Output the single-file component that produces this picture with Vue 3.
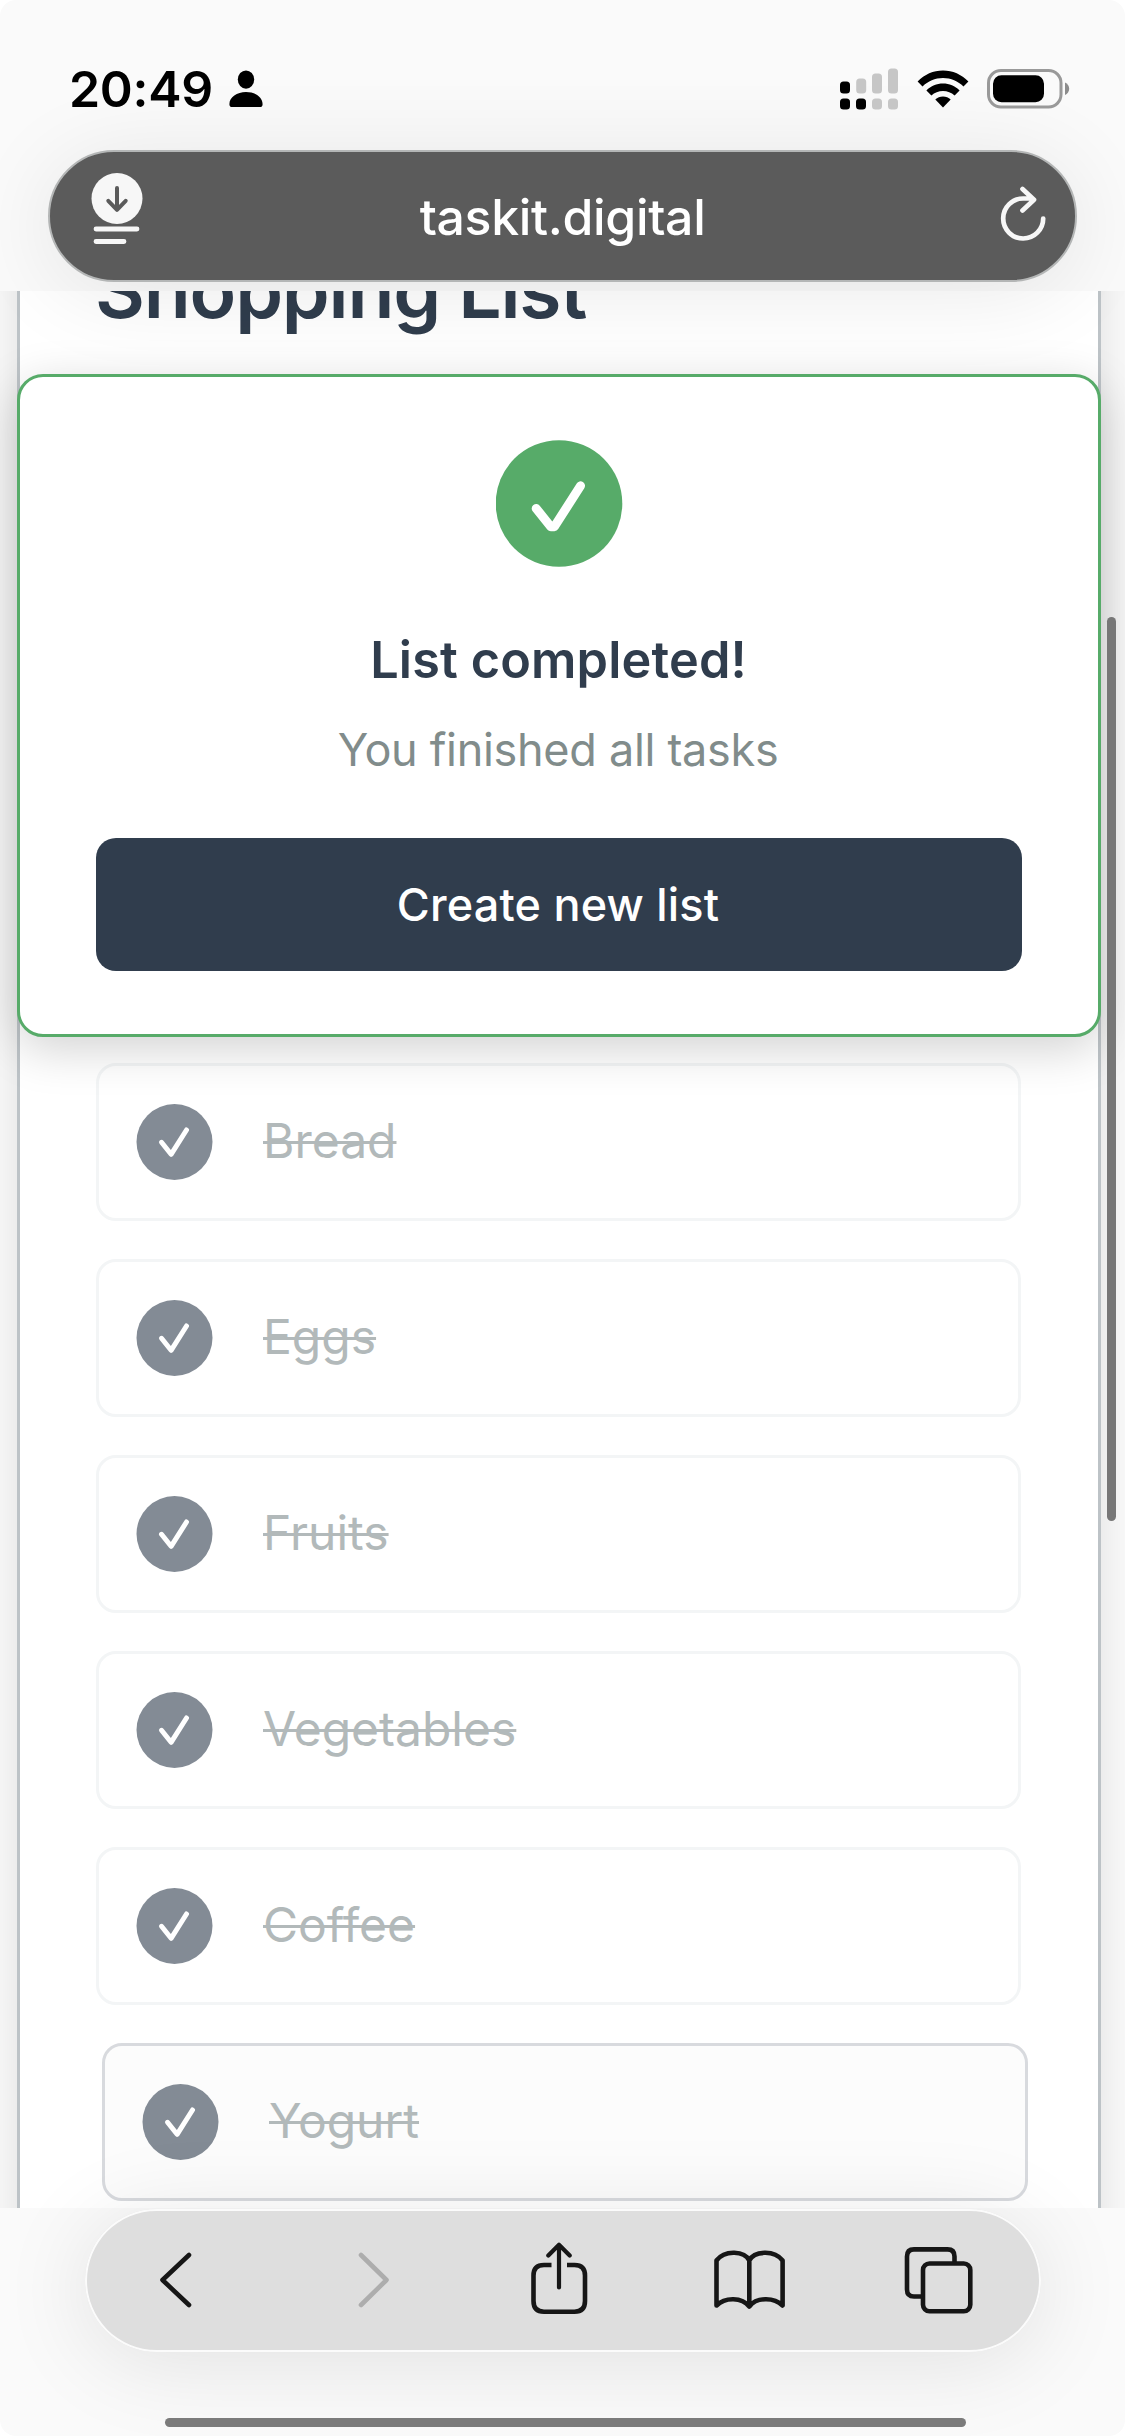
<script setup>
const items = [
  { name: 'Bread' },
  { name: 'Eggs' },
  { name: 'Fruits' },
  { name: 'Vegetables' },
  { name: 'Coffee' },
  { name: 'Yogurt', active: true },
]
</script>

<template>
  <div class="screen">
    <header class="top">
      <div class="status">
        <div class="clock">
          <span class="time">20:49</span>
          <svg class="person" width="34" height="38" viewBox="0 0 34 38">
            <ellipse cx="17" cy="9.6" rx="8.2" ry="9.2" />
            <path d="M.4 34.2C.4 27 8 22 17 22s16.600 5 16.600 12.200c0 2.200-1 2.800-3 2.800H3.400c-2 0-3-.6-3-2.800z" />
          </svg>
        </div>
        <div class="indicators">
          <svg width="59" height="42" viewBox="0 0 59 42">
            <g fill="#000">
              <rect x="0" y="13.500" width="10" height="12" rx="3.500" />
              <rect x="0" y="30.500" width="10" height="11" rx="3.500" />
              <rect x="16" y="30.500" width="10" height="11" rx="3.500" />
            </g>
            <g fill="#c6c6c6">
              <rect x="16.200" y="10.500" width="10" height="15" rx="3.500" />
              <rect x="32" y="5.500" width="10" height="20" rx="3.500" />
              <rect x="48" y="0.500" width="10" height="25" rx="3.500" />
              <rect x="32" y="30.500" width="10" height="11" rx="3.500" />
              <rect x="48" y="30.500" width="10" height="11" rx="3.500" />
            </g>
          </svg>
          <svg class="wifi" width="52" height="38" viewBox="0 0 52 38">
            <path d="M.6 11.400C7.500 4.300 16.300.4 26 .4s18.500 3.900 25.400 11l-4.900 5C41 11.200 34 8 26 8S11 11.200 5.500 16.400z" />
            <path d="M9.400 20.400C14 16 19.700 13.600 26 13.600s12 2.400 16.600 6.800l-5 5.100c-3.200-2.900-7.200-4.500-11.600-4.500s-8.400 1.600-11.600 4.500z" />
            <path d="M18.300 29.600c2.100-1.900 4.700-3 7.700-3s5.600 1.100 7.700 3L26 37.600z" />
          </svg>
          <svg class="battery" width="84" height="40" viewBox="0 0 84 40">
            <rect x="1.500" y="1.500" width="72.500" height="36.500" rx="12.500" fill="none" stroke="#999" stroke-width="3" />
            <rect x="6" y="6.300" width="51" height="27" rx="8.500" />
            <path d="M78 13.500c2.500 1 4.200 3.500 4.200 6.300s-1.700 5.200-4.200 6.200z" fill="#8c8c8c" />
          </svg>
        </div>
      </div>
      <div class="address">
        <svg class="reader" width="52" height="74" viewBox="0 0 52 74">
          <circle cx="26" cy="26.500" r="25.500" fill="#f7f7f7" />
          <path d="M26 16v21.500M17.300 28.800l8.700 9 8.700-9" fill="none" stroke="#5b5b5b" stroke-width="4" stroke-linecap="round" stroke-linejoin="round" />
          <path d="M5 57h41M5 69.500h28" stroke="#f7f7f7" stroke-width="4.800" stroke-linecap="round" />
        </svg>
        <span class="host">taskit.digital</span>
        <svg class="reload" width="50" height="60" viewBox="0 0 50 60">
          <path d="M44.200 32.500A20 20 0 1 1 24.500 12.500H32.500M23.500 3l11.500 10.700L23.500 24.500" fill="none" stroke="#f7f7f7" stroke-width="4.700" stroke-linecap="round" stroke-linejoin="round" />
        </svg>
      </div>
    </header>

    <main class="viewport">
      <section class="sheet">
        <h1>Shopping List</h1>
        <ul class="items">
          <li v-for="item in items" :key="item.name" class="item" :class="{ active: item.active }">
            <svg width="77" height="76" viewBox="0 0 77 76">
              <circle cx="38.500" cy="38" r="38" fill="#838b95" />
              <path d="M25.500 38.300l9.600 12L50.500 26" fill="none" stroke="#fff" stroke-width="5" stroke-linecap="round" stroke-linejoin="round" />
            </svg>
            <span class="label">{{ item.name }}</span>
          </li>
        </ul>
      </section>

      <section class="dialog">
        <svg width="127" height="127" viewBox="0 0 127 127">
          <circle cx="63" cy="63.500" r="63.300" fill="#57ab69" />
          <path d="M40.200 68.500l14.600 18.200h3.600L84.500 45.800" fill="none" stroke="#fff" stroke-width="9" stroke-linecap="round" stroke-linejoin="round" />
        </svg>
        <h2>List completed!</h2>
        <p>You finished all tasks</p>
        <button type="button">Create new list</button>
      </section>

      <div class="scrollbar"></div>
    </main>

    <footer class="bottom">
      <nav class="toolbar">
        <svg width="956" height="144" viewBox="0 0 956 144" fill="none" stroke="#161616" stroke-width="4.600" stroke-linecap="round" stroke-linejoin="round">
          <path d="M104 46L77.500 71 104 96" />
          <path d="M276 46L301.500 71 276 96" stroke="#adadad" />
          <path d="M474 36V78.500M463.300 46.500L474 35.700 484.700 46.500" stroke-width="4.200" />
          <path d="M466.500 56H459Q448.500 56 448.500 66.500V92Q448.500 102.700 459 102.700H489.500Q500 102.700 500 92V66.500Q500 56 489.500 56H482" stroke-linecap="butt" />
          <path d="M664.300 51.500C659.500 42 640 40.500 631.500 51.500V96.500C640 88 657 88 664.300 97.500C671.500 88 689 88 697.600 96.500V51.500C689 40.500 669 42 664.300 51.500V97.500" />
          <path d="M869.500 54V47.500Q869.500 40.400 862.500 40.400H829Q822 40.400 822 47.500V80.500Q822 87.500 829 87.500H838" stroke-linecap="butt" />
          <rect x="838" y="54.500" width="47.300" height="47.700" rx="6.500" />
        </svg>
      </nav>
      <div class="home"></div>
    </footer>
  </div>
</template>

<style>
body {
  background: #fff;
}
</style>

<style scoped>
.screen {
  width: 1125px;
  height: 2436px;
  display: grid;
  grid-template-rows: 291px 1917px 228px;
  overflow: hidden;
  border-radius: 16px;
  background: #fafafa;
  font-family: Inter, sans-serif;
}
svg {
  display: block;
  flex: none;
}
.top,
.bottom {
  position: relative;
  z-index: 2;
}
.status {
  box-sizing: border-box;
  height: 150px;
  padding: 28px 54px 0 69px;
  display: flex;
  align-items: center;
  justify-content: space-between;
}
.clock,
.indicators {
  display: flex;
  align-items: center;
}
.time {
  width: 145px;
  font-size: 50px;
  font-weight: 600;
  letter-spacing: -0.3px;
  white-space: nowrap;
}
.person {
  margin-left: 15px;
}
.wifi {
  margin-left: 18px;
}
.battery {
  margin-left: 18px;
}
.address {
  box-sizing: border-box;
  height: 132px;
  margin: 0 48px;
  padding: 0 26px 0 41px;
  border: 2px solid #b4b6b6;
  border-radius: 66px;
  background: #5b5b5b;
  box-shadow: 0 10px 90px rgba(0, 0, 0, 0.09);
  display: flex;
  align-items: center;
  justify-content: space-between;
  color: #fff;
}
.host {
  margin-right: 17px;
  padding-top: 1px;
  font-size: 50px;
  font-weight: 450;
  letter-spacing: -0.35px;
}
.reader {
  margin-bottom: 14px;
}
.viewport {
  position: relative;
  z-index: 1;
  overflow: hidden;
  background: #f9f9f9;
}
.sheet {
  box-sizing: border-box;
  width: 1084px;
  height: 2200px;
  margin: -42px 0 0 17px;
  padding: 0 76px;
  border: 3px solid #bdc3c7;
  border-width: 0 3px;
  background: #fff;
  box-shadow: 0 0 36px rgba(0, 0, 0, 0.1);
}
h1 {
  margin: 0 0 0 -1px;
  font-size: 76.800px;
  line-height: 84px;
  font-weight: 600;
  letter-spacing: -1.200px;
  color: #303d4d;
  white-space: nowrap;
}
.items {
  margin: 730px 0 0;
  padding: 0;
  list-style: none;
  display: flex;
  flex-direction: column;
  gap: 38px;
}
.item {
  box-sizing: border-box;
  height: 158px;
  width: 925px;
  padding-left: 37px;
  border: 3px solid #f3f5f6;
  border-radius: 20px;
  background: #fff;
  display: flex;
  align-items: center;
  gap: 50px;
}
.item.active {
  width: 926px;
  margin-left: 6px;
  border-color: #d8dade;
  background: #fcfcfc;
}
.label {
  padding-bottom: 3px;
  font-size: 48px;
  color: #b2b9ba;
  text-decoration: line-through;
  text-decoration-thickness: 3px;
}
.dialog {
  position: absolute;
  top: 83px;
  left: 17px;
  box-sizing: border-box;
  width: 1084px;
  height: 663px;
  padding: 63px 75px 62px;
  border: 3px solid #57ab69;
  border-radius: 26px;
  background: #fff;
  box-shadow: 0 12px 48px rgba(0, 0, 0, 0.18);
  display: flex;
  flex-direction: column;
  align-items: center;
}
h2 {
  margin: 63px 0 0;
  padding-right: 1px;
  font-size: 50.400px;
  line-height: 60px;
  font-weight: 600;
  letter-spacing: 0.15px;
  color: #303d4d;
}
p {
  margin: 30px 0 0;
  padding-right: 2px;
  font-size: 45px;
  line-height: 60px;
  letter-spacing: -0.3px;
  color: #818c8b;
}
button {
  width: 926px;
  height: 133px;
  margin: 58px 0 0;
  padding: 0 2px 0 0;
  border: 0;
  border-radius: 20px;
  background: #303d4d;
  font: 500 45px Inter, sans-serif;
  letter-spacing: 0.2px;
  color: #fff;
}
.scrollbar {
  position: absolute;
  top: 326px;
  left: 1107px;
  width: 9px;
  height: 904px;
  border-radius: 5px;
  background: #777;
}
.bottom {
  display: flex;
  flex-direction: column;
  align-items: center;
}
.toolbar {
  width: 956px;
  height: 143px;
  margin-top: 1px;
  border-radius: 72px;
  background: #dedede;
  box-shadow: inset 0 0 0 2px #fbfbfb, 0 10px 90px rgba(0, 0, 0, 0.1);
}
.home {
  width: 801px;
  height: 9px;
  margin-top: 66px;
  margin-left: 6px;
  border-radius: 5px;
  background: #7b7b7b;
}
</style>
